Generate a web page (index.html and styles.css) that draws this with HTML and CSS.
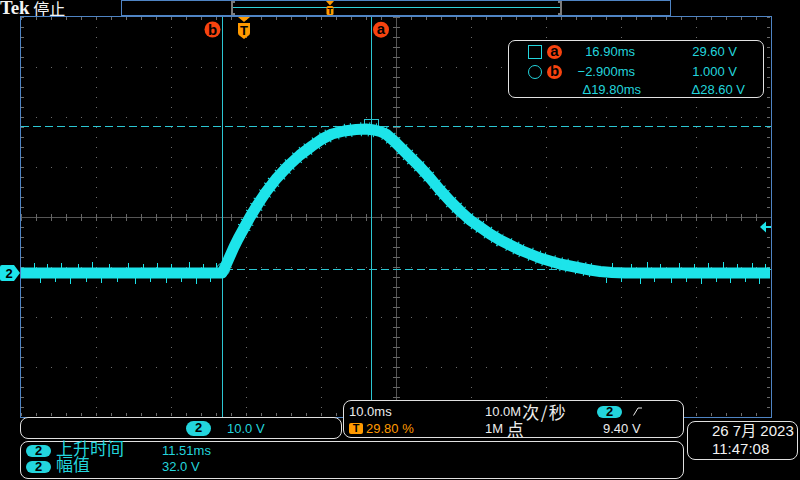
FILE: index.html
```html
<!DOCTYPE html>
<html lang="zh-CN">
<head>
<meta charset="utf-8">
<title>Tek 停止</title>
<link rel="stylesheet" href="styles.css">
</head>
<body>
<div class="screen">
  <header class="status">
    <div class="brand"><span class="logo">Tek</span><span class="run-state">停止</span></div>
    <div class="record">
      <svg width="548" height="14" viewBox="0 0 548 14">
        <!-- record overview: acquired window and trigger point -->
        <line x1="111" y1="6.5" x2="438" y2="6.5" stroke="#2fd2da" stroke-width="1"/>
        <polyline points="113,1 110,1 110,13 113,13" fill="none" stroke="#7b7b7b" stroke-width="2"/>
        <polyline points="436,1 439,1 439,13 436,13" fill="none" stroke="#7b7b7b" stroke-width="2"/>
        <polygon points="204,0 212,0 208,4.5" fill="#ff9a00"/>
        <rect x="204.5" y="5" width="7" height="9" rx="1.5" fill="#ff9a00"/>
        <text x="208" y="12.6" class="mark-text" font-size="9" text-anchor="middle">T</text>
      </svg>
    </div>
  </header>

  <div class="scope">
    <svg class="graticule" width="800" height="402" viewBox="0 16 800 402">
      <!-- division dots: 10px steps down the verticals, 15px along the horizontals -->
      <g fill="none" stroke="#6b6b6b" stroke-width="1">
        <path stroke-dasharray="1 9" d="M96.5 17V417M171.5 17V417M246.5 17V417M321.5 17V417M471.5 17V417M546.5 17V417M621.5 17V417M696.5 17V417"/>
        <path stroke-dasharray="1 14" d="M21 67.5H771M21 117.5H771M21 167.5H771M21 267.5H771M21 317.5H771M21 367.5H771"/>
        <path stroke-width="3" stroke-dasharray="1 14" d="M21 18.5H771M21 414.5H771"/>
        <path stroke-width="3" stroke-dasharray="1 9" d="M22.5 17V417M768.5 17V417"/>
      </g>
      <!-- centre cross with minor ticks -->
      <g fill="none" stroke="#555">
        <path d="M21 217.5H771M396.5 17V417"/>
        <path stroke="#666" stroke-width="7" stroke-dasharray="1 14" d="M21 217.5H771"/>
        <path stroke="#666" stroke-width="7" stroke-dasharray="1 9" d="M396.5 17V417"/>
      </g>
      <rect x="20.5" y="16.5" width="751" height="401" fill="none" stroke="#4f84c4"/>

      <!-- cursors: b at -2.900ms / 1.000 V, a at 16.90ms / 29.60 V -->
      <g fill="none" stroke="#2cc6d2" stroke-width="1">
        <path d="M222.5 17V417M371.5 17V417"/>
        <path stroke-dasharray="8 4" d="M21 126.5H771M21 269.5H771"/>
        <rect x="364.5" y="119.5" width="14" height="14"/>
        <circle cx="223" cy="269.5" r="6.5"/>
      </g>

      <!-- channel 2 trace: band plus noise slivers along the edge -->
      <polyline class="trace" fill="none" stroke="#1de4ea" stroke-width="11" stroke-linejoin="round"
        points="21,273 222,273 226,265 230,256 234,247 238,239 244,228 250,217 258,204 266,192 276,179 288,166 300,155 312,146 322,139 332,134 344,131 356,129.5 366,129 374,130 380,131.5 386,134 394,141 402,149 410,157 420,167 430,178 440,190 450,201 460,211 470,220 480,227 490,234 500,240 510,245 520,250 530,254 540,258 550,261 560,264 570,266 580,268 590,270 600,271.5 612,272.5 625,273 770,273"/>
      <polyline fill="none" stroke="#1de4ea" stroke-width="14" stroke-dasharray="1 5 1 9 1 7"
        points="244,228 250,217 258,204 266,192 276,179 288,166 300,155 312,146 322,139 332,134 344,131 356,129.5 366,129 374,130 380,131.5 386,134 394,141 402,149 410,157 420,167 430,178 440,190 450,201 460,211 470,220 480,227 490,234 500,240 510,245 520,250 530,254 540,258 550,261 560,264 570,266 580,268 590,270 600,271.5"/>
      <path fill="none" stroke="#1de4ea" stroke-width="1"
        d="M34.5 263V268M47.5 264V268M61.5 263V268M78.5 264V268M92.5 262V268M109.5 264V268M128.5 263V268M143.5 264V268M157.5 263V268M171.5 264V268M189.5 262V268M203.5 264V268M216.5 263V268
           M40.5 278V283M55.5 278V282M70.5 278V284M86.5 278V282M101.5 278V283M117.5 278V282M135.5 278V284M150.5 278V282M166.5 278V283M181.5 278V282M196.5 278V284M210.5 278V282
           M612.5 263V268M631.5 264V268M647.5 262V268M660.5 264V268M679.5 263V268M694.5 264V268M708.5 263V268M723.5 262V268M737.5 264V268M752.5 263V268M765.5 264V268
           M606.5 278V283M621.5 278V282M640.5 278V284M654.5 278V282M671.5 278V283M686.5 278V282M701.5 278V284M716.5 278V282M730.5 278V283M745.5 278V282M759.5 278V284"/>

      <!-- cursor badges and trigger position -->
      <circle cx="212.5" cy="29.5" r="8" fill="#f8430f"/>
      <text x="212.5" y="34.5" class="mark-text" font-size="15" text-anchor="middle">b</text>
      <circle cx="381" cy="29.7" r="8" fill="#f8430f"/>
      <text x="381" y="33.7" class="mark-text" font-size="15" text-anchor="middle">a</text>
      <polygon points="238,17 250,17 244,22" fill="#ff9a00"/>
      <path d="M238 23H250V33Q250 35 248 36L244 39L240 36Q238 35 238 33Z" fill="#ff9a00"/>
      <text x="244" y="34.5" class="mark-text" font-size="13" text-anchor="middle">T</text>

      <!-- channel 2 ground marker and trigger level -->
      <path d="M2 265H14L20 273L14 281H2Q0 281 0 279V267Q0 265 2 265Z" fill="#1de4ea"/>
      <text x="9" y="278" class="mark-text" font-size="13" text-anchor="middle">2</text>
      <polygon points="760,227 766,221.5 766,232.5" fill="#1de4ea"/>
      <rect x="766" y="226" width="5" height="2" fill="#1de4ea"/>
    </svg>

    <div class="readout">
      <span class="sq"></span><span class="mk">a</span><span class="t">16.90ms</span><span class="v">29.60 V</span>
      <span class="ring"></span><span class="mk">b</span><span class="t">−2.900ms</span><span class="v">1.000 V</span>
      <span class="t delta">Δ19.80ms</span><span class="v delta">Δ28.60 V</span>
    </div>
  </div>

  <footer class="bottom">
    <div class="panels">
      <div class="panel-row">
        <div class="box chan-box"><span class="pill tall">2</span><span class="scale">10.0 V</span></div>
        <div class="box time-box">
          <div>10.0ms</div>
          <div>10.0M<span class="han rate">次/秒</span></div>
          <div><span class="pill">2</span>
            <svg class="slope" width="9" height="9" viewBox="0 0 9 9"><path d="M0.5 8.5L5 1H9" fill="none" stroke="#e8e8e8" stroke-width="1"/></svg>
          </div>
          <div><span class="trig">T</span><span class="pos">29.80 %</span></div>
          <div>1M <span class="han">点</span></div>
          <div class="level">9.40 V</div>
        </div>
      </div>
      <div class="box meas-box">
        <span class="pill">2</span><div><span class="han">上升时间</span></div><div>11.51ms</div>
        <span class="pill">2</span><div><span class="han">幅值</span></div><div>32.0 V</div>
      </div>
    </div>
    <div class="box clock">
      <div>26 7月 2023</div>
      <div>11:47:08</div>
    </div>
  </footer>
</div>
</body>
</html>
```

FILE: styles.css
```css
* {
  box-sizing: border-box;
  margin: 0;
  padding: 0;
}

html,
body {
  background: #000;
}

body {
  width: 800px;
  height: 480px;
  overflow: hidden;
  font-family: "Liberation Sans", "Noto Sans CJK SC", sans-serif;
  font-size: 13px;
  color: #23d5dd;
}

/* top status line */
.status {
  display: flex;
  height: 16px;
}

.brand {
  width: 121px;
  display: flex;
  color: #f4f4f4;
}

.logo {
  font-family: "Liberation Serif", serif;
  font-weight: 700;
  font-size: 19px;
  line-height: 16px;
  letter-spacing: -0.2px;
}

.run-state {
  font-family: "Noto Sans CJK SC", sans-serif;
  font-size: 16px;
  line-height: 16px;
  margin-left: 4px;
}

.record {
  width: 550px;
  height: 16px;
  border: 1px solid #4f84c4;
}

.record svg,
.graticule {
  display: block;
}

.mark-text {
  font-family: "Liberation Sans", sans-serif;
  font-weight: 700;
  fill: #000;
}

/* waveform area */
.scope {
  position: relative;
  height: 402px;
}

.readout {
  position: absolute;
  left: 508px;
  top: 24px;
  width: 256px;
  height: 58px;
  border: 1px solid #e2e2e2;
  border-radius: 7px;
  background: #000;
  padding-left: 19px;
  display: grid;
  grid-template-columns: 14px 20px 73px 102px;
  grid-template-rows: 21px 19px 16px;
  align-items: center;
  line-height: 15px;
}

.sq,
.ring {
  width: 14px;
  height: 14px;
  border: 1px solid #23d5dd;
}

.ring {
  border-radius: 50%;
}

.mk {
  justify-self: end;
  width: 15px;
  height: 14px;
  border-radius: 50%;
  background: #f8430f;
  color: #000;
  font-weight: 700;
  font-size: 15px;
  line-height: 12px;
  text-align: center;
}

.t,
.v {
  justify-self: end;
  white-space: nowrap;
}

.t.delta {
  grid-column: 3;
  margin-right: -6px;
}

.v.delta {
  margin-right: -8px;
}

/* bottom panels */
.bottom {
  position: relative;
  display: flex;
  align-items: flex-start;
}

.panels {
  margin-left: 20px;
  width: 664px;
}

.panel-row {
  display: flex;
  align-items: flex-start;
  height: 21px;
}

.box {
  border: 1px solid #e0e0e0;
  border-radius: 8px;
  background: #000;
}

.pill {
  display: inline-flex;
  align-items: center;
  justify-content: center;
  width: 25px;
  height: 12px;
  border-radius: 6px;
  background: #23d5dd;
  color: #000;
  font-weight: 700;
  font-size: 13px;
  line-height: 12px;
}

.pill.tall {
  height: 15px;
  border-radius: 8px;
}

.han {
  font-family: "Noto Sans CJK SC", sans-serif;
  font-size: 17px;
  line-height: 0;
}

.han.rate {
  margin-left: 1px;
  letter-spacing: 1.5px;
}

.chan-box {
  width: 322px;
  height: 22px;
  margin-top: -1px;
  display: flex;
  align-items: center;
  padding-left: 165px;
}

.scale {
  margin-left: 16px;
}

.time-box {
  width: 341px;
  height: 38px;
  margin-top: -18px;
  margin-left: 1px;
  padding: 2px 0 0 5px;
  display: grid;
  grid-template-columns: 136px 111px 1fr;
  grid-auto-rows: 17px;
  line-height: 17px;
  color: #ececec;
}

.time-box > div {
  display: flex;
  align-items: center;
  white-space: pre;
}

.time-box .pill {
  margin-left: 1px;
}

.slope {
  margin-left: 11px;
}

.trig {
  width: 14px;
  height: 11px;
  border-radius: 2px;
  background: #ff9a00;
  color: #000;
  font-weight: 700;
  font-size: 11px;
  line-height: 11px;
  text-align: center;
}

.pos {
  margin-left: 3px;
  color: #ff9a00;
}

.level {
  padding-left: 7px;
}

.meas-box {
  margin-top: 2px;
  width: 664px;
  height: 38px;
  padding: 1px 0 0 5px;
  display: grid;
  grid-template-columns: 30px 106px 1fr;
  grid-auto-rows: 16px;
  line-height: 16px;
  align-items: center;
}

.clock {
  margin: 3px 0 0 3px;
  width: 111px;
  height: 39px;
  padding-left: 24px;
  color: #f2f2f2;
  font-size: 15px;
  line-height: 18px;
  white-space: nowrap;
}
```
